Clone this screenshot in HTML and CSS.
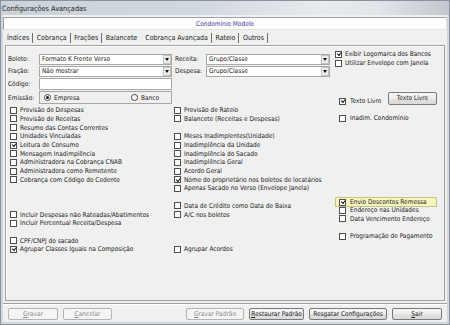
FILE: index.html
```html
<!DOCTYPE html>
<html lang="pt-BR">

<head>
    <meta charset="UTF-8">
    <title>Configurações Avançadas</title>
    <link rel="stylesheet" href="styles.css">
</head>

<body>
    <div class="window">
        <div class="titlebar">Configurações Avançadas</div>
        <div class="client">
            <div class="banner">Condomínio Modelo</div>

            <div class="tabs">
                <span class="tab sep">Índices</span>
                <span class="tab sep">Cobrança</span>
                <span class="tab sep">Frações</span>
                <span class="tab">Balancete</span>
                <span class="tab active sep">Cobrança Avançada</span>
                <span class="tab sep">Rateio</span>
                <span class="tab sep">Outros</span>
            </div>

            <div class="panel">
                <!-- left column: boleto fields + options -->
                <div class="col col-left">
                    <div class="field first">
                        <label>Boleto:</label>
                        <div class="combo"><span>Formato K Frente Verso</span><i class="arrow"></i></div>
                    </div>
                    <div class="field">
                        <label>Fração:</label>
                        <div class="combo"><span>Não mostrar</span><i class="arrow"></i></div>
                    </div>
                    <div class="field code">
                        <label>Código:</label>
                        <div class="edit"></div>
                    </div>
                    <div class="field emit">
                        <label>Emissão:</label>
                        <div class="radios">
                            <span class="radio-opt"><span class="radio on"></span>Empresa</span>
                            <span class="radio-opt"><span class="radio"></span>Banco</span>
                        </div>
                    </div>

                    <div class="list">
                        <div class="opt"><span class="cb"></span>Previsão de Despesas</div>
                        <div class="opt"><span class="cb"></span>Previsão de Receitas</div>
                        <div class="opt"><span class="cb"></span>Resumo das Contas Correntes</div>
                        <div class="opt"><span class="cb"></span>Unidades Vinculadas</div>
                        <div class="opt"><span class="cb on"></span>Leitura de Consumo</div>
                        <div class="opt"><span class="cb"></span>Mensagem Inadimplência</div>
                        <div class="opt"><span class="cb"></span>Administradora na Cobrança CNAB</div>
                        <div class="opt"><span class="cb"></span>Administradora como Remetente</div>
                        <div class="opt"><span class="cb"></span>Cobrança com Código do Cedente</div>
                        <div class="opt"></div>
                        <div class="opt"></div>
                        <div class="opt"></div>
                        <div class="opt"><span class="cb"></span>Incluir Despesas não Rateadas/Abatimentos</div>
                        <div class="opt"><span class="cb"></span>Incluir Percentual Receita/Despesa</div>
                        <div class="opt"></div>
                        <div class="opt"><span class="cb"></span>CPF/CNPJ do sacado</div>
                        <div class="opt"><span class="cb on"></span>Agrupar Classes Iguais na Composição</div>
                    </div>
                </div>

                <!-- middle column -->
                <div class="col col-mid">
                    <div class="field first">
                        <label>Receita:</label>
                        <div class="combo"><span>Grupo/Classe</span><i class="arrow"></i></div>
                    </div>
                    <div class="field">
                        <label>Despesa:</label>
                        <div class="combo"><span>Grupo/Classe</span><i class="arrow"></i></div>
                    </div>

                    <div class="list">
                        <div class="opt"><span class="cb"></span>Previsão de Rateio</div>
                        <div class="opt"><span class="cb"></span>Balancete (Receitas e Despesas)</div>
                        <div class="opt"></div>
                        <div class="opt"><span class="cb"></span>Meses Inadimplentes(Unidade)</div>
                        <div class="opt"><span class="cb"></span>Inadimplência da Unidade</div>
                        <div class="opt"><span class="cb"></span>Inadimplência do Sacado</div>
                        <div class="opt"><span class="cb"></span>Inadimplência Geral</div>
                        <div class="opt"><span class="cb"></span>Acordo Geral</div>
                        <div class="opt"><span class="cb on"></span>Nome do proprietário nos boletos de locatários</div>
                        <div class="opt"><span class="cb"></span>Apenas Sacado no Verso (Envelope Janela)</div>
                        <div class="opt"></div>
                        <div class="opt"><span class="cb"></span>Data de Crédito como Data de Baixa</div>
                        <div class="opt"><span class="cb"></span>A/C nos boletos</div>
                        <div class="opt"></div>
                        <div class="opt"></div>
                        <div class="opt"></div>
                        <div class="opt"><span class="cb"></span>Agrupar Acordos</div>
                    </div>
                </div>

                <!-- right column -->
                <div class="col col-right">
                    <div class="opt top-opt first"><span class="cb on"></span>Exibir Logomarca dos Bancos</div>
                    <div class="opt top-opt"><span class="cb"></span>Utilizar Envelope com Janela</div>

                    <div class="texto-row">
                        <div class="opt"><span class="cb on"></span>Texto Livre</div>
                        <div class="btn">Texto Livre</div>
                    </div>
                    <div class="opt side inadim"><span class="cb"></span>Inadim. Condomínio</div>

                    <div class="opt side highlight"><span class="cb on"></span>Envio Descontos Remessa</div>
                    <div class="opt side"><span class="cb"></span>Endereço nas Unidades</div>
                    <div class="opt side"><span class="cb"></span>Data Vencimento Endereço</div>
                    <div class="opt side"></div>
                    <div class="opt side"><span class="cb"></span>Programação de Pagamento</div>
                </div>
            </div>

            <div class="footer">
                <div class="btn off w-gravar"><u>G</u>ravar</div>
                <div class="btn off w-cancelar"><u>C</u>ancelar</div>
                <div class="btn off w-padrao push"><u>G</u>ravar Padrão</div>
                <div class="btn w-restaurar"><u>R</u>estaurar Padrão</div>
                <div class="btn w-resgatar">Resgatar Configurações</div>
                <div class="btn w-sair"><u>S</u>air</div>
            </div>
        </div>
    </div>
</body>

</html>
```

FILE: styles.css
```css
body {
    margin: 0;
    font-family: "DejaVu Sans Condensed", "DejaVu Sans", sans-serif;
    font-stretch: condensed;
    font-size: 6.5px;
    color: #222;
    background-color: #f0f0f0;
}

.window {
    width: 450px;
    height: 325px;
    box-sizing: border-box;
    border: 1px solid #8a939c;
    background-color: #cfd6dd;
    display: flex;
    flex-direction: column;
}

.titlebar {
    height: 14px;
    flex: none;
    display: flex;
    align-items: center;
    padding-left: 1px;
    font-size: 7.3px;
    color: #1e1e1e;
    background: linear-gradient(90deg, #cbd2da 0%, #d2d8df 45%, #e8ebee 72%, #e2e5e9 84%, #c3c8ce 100%);
}

.client {
    flex: 1;
    margin: 0 2px 2px;
    background-color: #f0f0f0;
    display: flex;
    flex-direction: column;
}

.banner {
    margin-top: 2px;
    height: 13px;
    box-sizing: border-box;
    border: 1px solid #a0a0a0;
    border-right-color: #e3e3e3;
    border-bottom-color: #e3e3e3;
    background-color: #fdfdfd;
    color: #3a3a96;
    display: flex;
    align-items: center;
    justify-content: center;
}

/* tab strip */
.tabs {
    height: 15px;
    display: flex;
    align-items: center;
    padding-left: 0.5px;
    font-size: 7px;
}

.tab {
    height: 10px;
    line-height: 10px;
    padding: 0 3px 0 3.5px;
}

.tab.sep {
    border-right: 1px solid #6e6e6e;
}

.tab.active {
    margin-left: 1.5px;
}

.panel {
    height: 256px;
    margin: 0 2px;
    box-sizing: border-box;
    border: 1px solid #a0a0a0;
    box-shadow: inset 1px 1px 0 #fff;
    display: grid;
    grid-template-columns: 168px 159px 1fr;
}

.col {
    display: flex;
    flex-direction: column;
}

/* label + input rows */
.field {
    height: 12px;
    display: flex;
    align-items: center;
    flex: none;
}

.field.first {
    margin-top: 7px;
}

.field label {
    width: 33px;
    padding-left: 2px;
    box-sizing: border-box;
}

.col-mid .field label {
    width: 32px;
    padding-left: 1px;
}

.combo,
.edit {
    width: 133px;
    height: 11px;
    box-sizing: border-box;
    border: 1px solid #a7a7a7;
    background-color: #fff;
    display: flex;
    align-items: center;
    padding-left: 2px;
}

.col-mid .combo {
    width: 124px;
}

.combo .arrow {
    margin-left: auto;
    width: 8px;
    height: 9px;
    box-sizing: border-box;
    border: 1px solid #c4c4c4;
    background-color: #ececec;
    display: flex;
    align-items: center;
    justify-content: center;
}

.combo .arrow::after {
    content: "";
    border-top: 3px solid #111;
    border-left: 2.5px solid transparent;
    border-right: 2.5px solid transparent;
}

.field.code {
    margin-top: 1px;
}

.field.code .edit {
    height: 12px;
}

.field.emit {
    margin-top: 1px;
    height: 13px;
}

.radios {
    width: 133px;
    height: 13px;
    box-sizing: border-box;
    border: 1px solid #a7a7a7;
    display: flex;
    align-items: center;
    padding-left: 4px;
}

.radio-opt {
    display: flex;
    align-items: center;
    gap: 3px;
}

.radio-opt:first-child {
    width: 87px;
}

.radio {
    width: 7px;
    height: 7px;
    box-sizing: border-box;
    border: 1px solid #444;
    border-radius: 50%;
    background-color: #fff;
    display: flex;
    align-items: center;
    justify-content: center;
}

.radio.on::after {
    content: "";
    width: 3px;
    height: 3px;
    border-radius: 50%;
    background-color: #1a1a1a;
}

/* checkbox options */
.list {
    display: flex;
    flex-direction: column;
}

.col-left .list {
    margin-top: 1.95px;
    padding-left: 4px;
}

.col-mid .list {
    margin-top: 28.95px;
}

.opt {
    height: 8.7px;
    flex: none;
    display: flex;
    align-items: center;
    gap: 3px;
    white-space: nowrap;
}

.cb {
    width: 7px;
    height: 7px;
    box-sizing: border-box;
    border: 1px solid #4e4e4e;
    background-color: #fff;
    position: relative;
    flex: none;
}

.cb.on::after {
    content: "";
    position: absolute;
    left: 0.8px;
    top: 0.3px;
    width: 3px;
    height: 1.5px;
    border-left: 1.3px solid #111;
    border-bottom: 1.3px solid #111;
    transform: rotate(-50deg);
}

.top-opt {
    padding-left: 2px;
}

.top-opt.first {
    margin-top: 4.15px;
}

.texto-row {
    margin-top: 24.45px;
    height: 13px;
    display: flex;
    align-items: flex-end;
    padding-left: 6px;
}

.texto-row .opt {
    width: 49px;
    gap: 4px;
    margin-bottom: -0.5px;
}

.texto-row .btn {
    width: 49px;
    height: 13px;
}

.side {
    padding-left: 6px;
    gap: 4px;
}

.inadim {
    margin-top: 9.15px;
}

.highlight {
    margin-top: 74.3px;
    margin-left: 2px;
    margin-bottom: -1.3px;
    width: 102px;
    height: 10px;
    box-sizing: border-box;
    padding-left: 3px;
    border: 1px solid #c5c584;
    background-color: #f5f5bc;
    position: relative;
    z-index: 1;
}

/* buttons */
.btn {
    height: 12px;
    box-sizing: border-box;
    border: 1px solid #7a7a7a;
    border-radius: 2px;
    background: linear-gradient(#f6f6f6, #ededed 50%, #e2e2e2 51%, #d9d9d9);
    display: flex;
    align-items: center;
    justify-content: center;
    white-space: nowrap;
}

.btn.off {
    border-color: #b0b4b8;
    background: #f4f4f4;
    color: #8c8c8c;
}

.footer {
    flex: 1;
    margin-top: 2px;
    border-top: 1px solid #a0a0a0;
    box-shadow: inset 0 1px 0 #fff;
    display: flex;
    align-items: flex-start;
    padding: 4px 5px 0;
    gap: 5px;
}

.w-gravar { width: 50px; }
.w-cancelar { width: 49px; }
.w-padrao { width: 58px; }
.w-restaurar { width: 55px; }
.w-resgatar { width: 78px; }
.w-sair { width: 50px; }

.push {
    margin-left: auto;
}
```
